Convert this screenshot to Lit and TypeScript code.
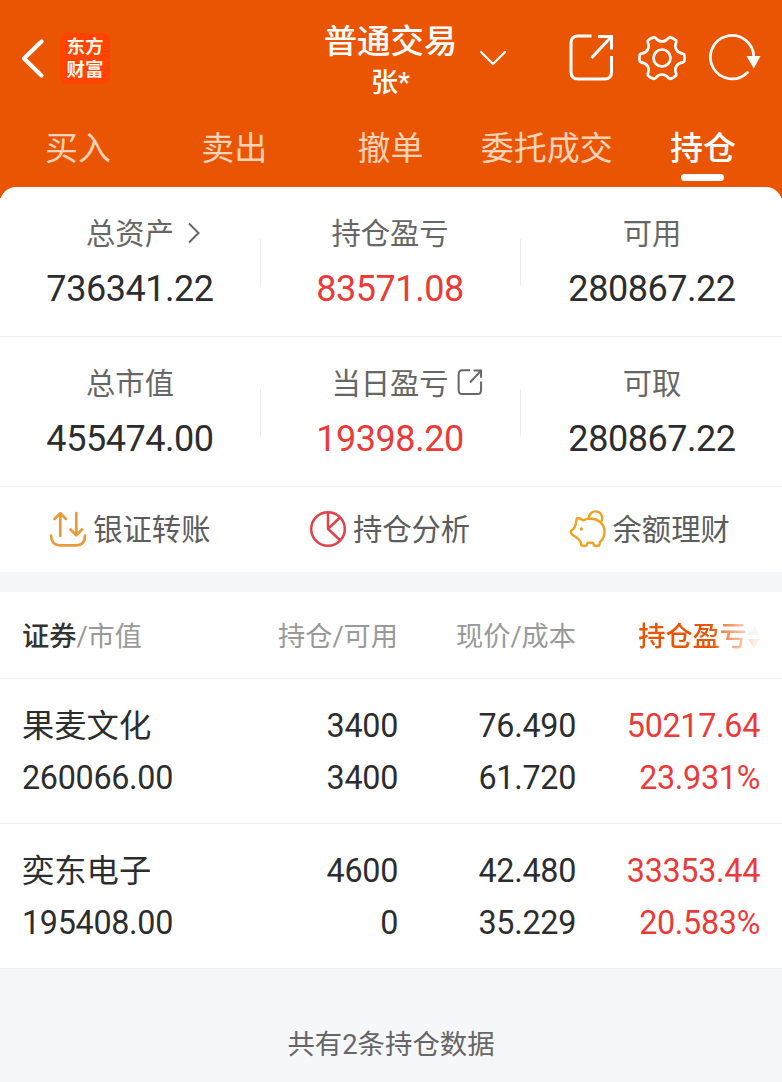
import { LitElement, html, svg, css, nothing } from "lit";
import { customElement, state } from "lit/decorators.js";
import { classMap } from "lit/directives/class-map.js";

interface Metric {
  label: string;
  value: string;
  red?: boolean;
  icon?: "chevron" | "open";
}

interface Holding {
  name: string;
  marketValue: string;
  amount: string;
  available: string;
  price: string;
  cost: string;
  profit: string;
  rate: string;
}

const TABS = ["买入", "卖出", "撤单", "委托成交", "持仓"];

const METRICS: Metric[][] = [
  [
    { label: "总资产", value: "736341.22", icon: "chevron" },
    { label: "持仓盈亏", value: "83571.08", red: true },
    { label: "可用", value: "280867.22" },
  ],
  [
    { label: "总市值", value: "455474.00" },
    { label: "当日盈亏", value: "19398.20", red: true, icon: "open" },
    { label: "可取", value: "280867.22" },
  ],
];

const HOLDINGS: Holding[] = [
  {
    name: "果麦文化", marketValue: "260066.00", amount: "3400", available: "3400",
    price: "76.490", cost: "61.720", profit: "50217.64", rate: "23.931%",
  },
  {
    name: "奕东电子", marketValue: "195408.00", amount: "4600", available: "0",
    price: "42.480", cost: "35.229", profit: "33353.44", rate: "20.583%",
  },
];

// Six-lobed gear outline centred on (24, 24).
const gearPath = (() => {
  const at = (deg: number, r: number) => {
    const t = (deg * Math.PI) / 180;
    return `${(24 + r * Math.cos(t)).toFixed(2)} ${(24 + r * Math.sin(t)).toFixed(2)}`;
  };
  let d = `M${at(-9, 22.4)}`;
  for (let a = 0; a < 360; a += 60) {
    d += `Q${at(a, 23)} ${at(a + 9, 22.4)}`;
    d += `L${at(a + 12, 21.2)}`;
    d += `C${at(a + 19, 15.6)} ${at(a + 41, 15.6)} ${at(a + 48, 21.2)}`;
    d += `L${at(a + 51, 22.4)}`;
  }
  return d + "Z";
})();

const openShape = svg`
  <path d="M22.5 2H9Q2 2 2 9V38Q2 45 9 45H35.500Q42.500 45 42.500 38V22" />
  <path d="M29 2.500H42.500V15.500M42 3L22.500 24" />
`;

@customElement("app-root")
export class AppRoot extends LitElement {
  @state() private active = 4;

  static styles = css`
    :host {
      display: block;
      width: 100%;
      min-height: 1082px;
      background: #f6f7fa;
      color: #2c2d2f;
      font-family: Roboto, "Noto Sans CJK SC", sans-serif;
    }
    * { box-sizing: border-box; }
    svg { display: block; flex: none; fill: none; stroke: currentColor; }
    .header { height: 198px; background: #ea5504; color: #fff; }
    .bar { display: grid; grid-template-columns: 1fr 180px 1fr; height: 117px; }
    .left { display: flex; align-items: center; padding-left: 20px; }
    .logo {
      width: 50px; height: 51px; margin-left: 14px;
      display: grid; align-content: center; justify-items: center;
      border-radius: 8px; background: #ff4300; color: #fff4e8;
      font-size: 18.500px; line-height: 22.500px; font-weight: 700;
    }
    .title { display: flex; flex-direction: column; align-items: center; padding-top: 20px; margin-left: -1px; white-space: nowrap; }
    .main { font-size: 33.400px; line-height: 44px; font-weight: 500; }
    .user { font-size: 27px; line-height: 38px; font-weight: 500; }
    .right { display: flex; align-items: center; padding-right: 21px; }
    .down { margin: 0 auto 2px -2px; }
    .share { margin-right: 24px; }
    .gear { margin-right: 23px; }
    .share, .gear, .refresh { margin-bottom: 1px; }
    .tabs { display: grid; grid-template-columns: repeat(5, 1fr); padding-right: 1px; }
    .tab {
      display: flex; flex-direction: column; align-items: center;
      padding-top: 1px; height: 70px;
      color: #ffd3b8; font-size: 33px; line-height: 62px; cursor: pointer; white-space: nowrap;
    }
    .tab.on { color: #fff; font-weight: 500; }
    .tab.on::after { content: ""; width: 43px; height: 7px; margin-top: -6px; border-radius: 4px; background: #fff; flex: none; }
    .panel { margin-top: -11px; background: #fff; border-radius: 16px 16px 0 0; position: relative; }
    .metrics { display: grid; grid-template-columns: repeat(3, 260px); height: 150px; border-bottom: 1px solid #efeff1; }
    .metric {
      display: flex; flex-direction: column; align-items: center; padding-top: 25px;
      background: linear-gradient(#ececee, #ececee) left 52px / 1px 47px no-repeat;
    }
    .metric:first-child { background: none; }
    .metric:last-child { padding-left: 4px; }
    .label { display: flex; align-items: center; height: 44px; font-size: 29.300px; line-height: 44px; color: #666; }
    .slot { width: 0; }
    .chevron { margin-left: 13px; margin-bottom: 2px; }
    .open { margin-left: 8px; margin-bottom: 3px; }
    .value { font-size: 36px; letter-spacing: -0.450px; line-height: 44px; margin-top: 11px; }
    .red { color: #ea3a3a; }
    .actions { display: grid; grid-template-columns: repeat(3, 1fr); height: 85px; padding-right: 3px; }
    .action { display: flex; align-items: center; justify-content: center; gap: 6px; font-size: 29.300px; color: #5c5c5c; line-height: 44px; white-space: nowrap; }
    .action svg { margin-bottom: 2px; }
    .table { margin-top: 20px; background: #fff; }
    .row {
      display: grid; grid-template-columns: 200px 176px 178px 184px; align-content: center;
      height: 145px; padding: 2px 22px 0; border-bottom: 1px solid #efeff1;
      font-size: 32.300px; line-height: 52px; text-align: right; white-space: nowrap;
    }
    .row > :nth-child(4n + 1) { text-align: left; }
    .num { letter-spacing: -0.300px; }
    .head { height: 87px; font-size: 27.200px; color: #999; padding-top: 3px; }
    .strong { color: #333; font-weight: 500; }
    .sorted {
      display: flex; align-items: center; justify-content: flex-end; gap: 1px; color: #ea5504; font-weight: 500;
      -webkit-mask-image: linear-gradient(to right, #000 134px, rgba(0, 0, 0, 0.100) 178px);
      mask-image: linear-gradient(to right, #000 134px, rgba(0, 0, 0, 0.100) 178px);
    }
    .footer { padding-top: 54px; text-align: center; font-size: 27.400px; line-height: 44px; color: #666; }
  `;

  private actionIcon(i: number) {
    if (i === 0) {
      return html`<svg width="38" height="38" viewBox="0 0 38 38" stroke-width="2.700" stroke-linecap="round" stroke-linejoin="round">
        <g stroke="#e99a3c"><path d="M2 25.500Q2.500 35.300 11 35.300H27Q36 35.300 36 25.500M11.300 26V3.500M5.500 9L11.300 3.200L17 9M27.300 3V25M21.500 19.500L27.300 25.300L33 19.500" /></g>
      </svg>`;
    }
    if (i === 1) {
      return html`<svg width="38" height="38" viewBox="0 0 38 38" stroke-width="2.500" stroke-linejoin="round">
        <g stroke="#df4248"><circle cx="19" cy="19" r="16.800" /><path d="M19 2.500V19L31 7.500M19 19L31.500 30.500" /></g>
      </svg>`;
    }
    return html`<svg width="38" height="38" viewBox="0 0 38 38" stroke-width="2.400" stroke-linecap="round" stroke-linejoin="round">
      <g stroke="#eba321">
        <path d="M7.800 8.400Q11 7.800 14 10.300Q17.500 8.700 22 8.800C29.500 9 35.500 14 35.500 21.500Q35.500 28 31 32L30.200 35.400Q27.500 36.600 25 35.400L24 33Q20.500 32.300 18.500 33L17.500 35.400Q15 36.600 12.500 35.400L11.500 31.500Q9.800 28.500 6.500 26.700L3 24.500Q1.200 22 2.200 20.500Q6 18.500 6.700 14Z" />
        <path d="M19.800 8.300A6.700 6.700 0 1 1 31.800 12.200" />
      </g>
      <circle cx="12.300" cy="19" r="1.700" fill="#eba321" stroke="none" />
    </svg>`;
  }

  private metric(m: Metric) {
    return html`<div class="metric">
      <div class="label">
        <span>${m.label}</span>
        ${m.icon
          ? html`<span class="slot">${m.icon === "chevron"
              ? html`<svg class="chevron" width="14" height="22" viewBox="0 0 14 22" stroke-width="2"><path d="M2 1.500L11.500 11L2 20.500" /></svg>`
              : html`<svg class="open" width="26" height="27" viewBox="-1 0 47 48" stroke-width="3.600">${openShape}</svg>`}</span>`
          : nothing}
      </div>
      <div class=${classMap({ value: true, red: !!m.red })}>${m.value}</div>
    </div>`;
  }

  render() {
    return html`
      <header class="header">
        <div class="bar">
          <div class="left">
            <svg width="26" height="42" viewBox="0 0 26 42" stroke-width="4.200" stroke-linecap="round" stroke-linejoin="round"><path d="M21.500 3.500L4 20.500L21.500 37.500" /></svg>
            <div class="logo"><span>东方</span><span>财富</span></div>
          </div>
          <div class="title"><div class="main">普通交易</div><div class="user">张*</div></div>
          <div class="right">
            <svg class="down" width="28" height="18" viewBox="0 0 28 18" stroke-width="2.200" stroke-linecap="round" stroke-linejoin="round"><path d="M2 3L14 15L26 3" /></svg>
            <svg class="share" width="45" height="48" viewBox="0 0 45 48" stroke-width="3">${openShape}</svg>
            <svg class="gear" width="48" height="48" viewBox="0 0 48 48" stroke-width="2.700" stroke-linejoin="round"><path d=${gearPath} /><circle cx="24" cy="24" r="8.500" /></svg>
            <svg class="refresh" width="52" height="48" viewBox="1 0 52 48" stroke-width="2.700" stroke-linecap="round"><path d="M39.500 38.500A21.700 21.700 0 1 1 45.800 23" /><path d="M38.500 22H52.500L45.800 34.500Z" fill="currentColor" stroke="none" /></svg>
          </div>
        </div>
        <nav class="tabs">
          ${TABS.map((t, i) => html`<div class=${classMap({ tab: true, on: i === this.active })} @click=${() => (this.active = i)}>${t}</div>`)}
        </nav>
      </header>
      <section class="panel">
        ${METRICS.map((r) => html`<div class="metrics">${r.map((m) => this.metric(m))}</div>`)}
        <div class="actions">
          ${["银证转账", "持仓分析", "余额理财"].map((a, i) => html`<div class="action">${this.actionIcon(i)}<span>${a}</span></div>`)}
        </div>
      </section>
      <section class="table">
        <div class="row head">
          <div><span class="strong">证券</span>/市值</div>
          <div>持仓/可用</div>
          <div>现价/成本</div>
          <div class="sorted">
            <span>持仓盈亏</span>
            <svg width="12" height="24" viewBox="0 0 12 24"><path d="M6 1L12 10H0Z" fill="#b5b5b5" stroke="none" /><path d="M0 14H12L6 23Z" fill="#ea5504" stroke="none" /></svg>
          </div>
        </div>
        ${HOLDINGS.map((h) => html`<div class="row">
          <div>${h.name}</div><div class="num">${h.amount}</div><div class="num">${h.price}</div><div class="num red">${h.profit}</div>
          <div class="num">${h.marketValue}</div><div class="num">${h.available}</div><div class="num">${h.cost}</div><div class="num red">${h.rate}</div>
        </div>`)}
      </section>
      <footer class="footer">共有2条持仓数据</footer>
    `;
  }
}
